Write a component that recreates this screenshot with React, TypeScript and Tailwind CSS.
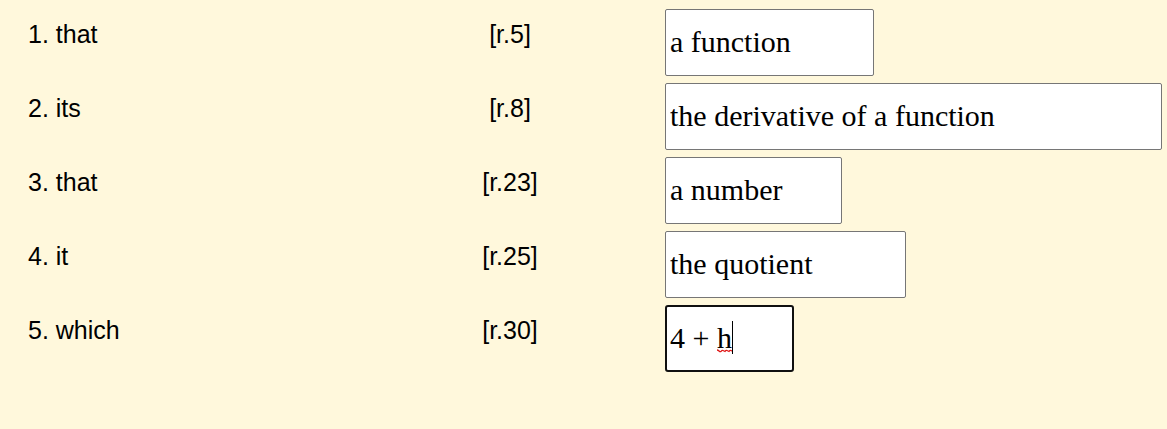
import { useEffect, useRef, useState } from "react";

const rows = [
  { word: "that", line: "[r.5]", answer: "a function", width: "w-[209px]" },
  { word: "its", line: "[r.8]", answer: "the derivative of a function", width: "w-[497px]" },
  { word: "that", line: "[r.23]", answer: "a number", width: "w-[177px]" },
  { word: "it", line: "[r.25]", answer: "the quotient", width: "w-[241px]" },
  { word: "which", line: "[r.30]", answer: "4 + h", width: "w-[129px]" },
];

export default function App() {
  const [answers, setAnswers] = useState(rows.map((row) => row.answer));
  const lastInput = useRef<HTMLInputElement>(null);

  useEffect(() => {
    const input = lastInput.current;
    if (input) {
      input.focus();
      input.setSelectionRange(input.value.length, input.value.length);
    }
  }, []);

  return (
    <main className="min-h-screen bg-[#fff8dc] pt-[9px] pr-[5px] font-['Liberation_Sans',Arial,sans-serif] text-[25px] leading-[29px] text-black">
      <ol className="flex flex-col gap-[7px]">
        {rows.map((row, i) => {
          const last = i === rows.length - 1;
          return (
            <li key={i} className="grid grid-cols-[355fr_310fr_497fr] items-start">
              <label htmlFor={`answer-${i}`} className="pt-[11px] pl-7">
                {`${i + 1}. ${row.word}`}
              </label>
              <span className="pt-[11px] text-center">{row.line}</span>
              <div className="relative flex">
                <input
                  id={`answer-${i}`}
                  ref={last ? lastInput : undefined}
                  type="text"
                  spellCheck={false}
                  value={answers[i]}
                  onChange={(e) =>
                    setAnswers(answers.map((a, j) => (j === i ? e.target.value : a)))
                  }
                  className={`h-[67px] max-w-full rounded-[2px] border border-[#767676] bg-white px-1 pb-[2px] font-['Liberation_Serif','Times_New_Roman',serif] text-[30px] outline-none focus:rounded-[3px] focus:border-2 focus:border-[#101010] focus:px-[3px] ${row.width}`}
                />
                {last && answers[i] === "4 + h" && (
                  <>
                    <svg
                      aria-hidden="true"
                      className="pointer-events-none absolute top-[44px] left-[52px] h-[4px] w-4"
                      viewBox="0 0 16 4"
                      fill="none"
                      stroke="#e01818"
                      strokeWidth="1.3"
                    >
                      <path d="M0 1Q1 1 2 2T4 2.5Q5 1 6 1.5T8 2.5Q9 1 10 1.5T12 2.5Q13 1 14 1.5T16 2.5" />
                    </svg>
                    <span
                      aria-hidden="true"
                      className="pointer-events-none absolute top-4 left-[67px] h-[33px] w-px bg-black"
                    />
                  </>
                )}
              </div>
            </li>
          );
        })}
      </ol>
    </main>
  );
}
